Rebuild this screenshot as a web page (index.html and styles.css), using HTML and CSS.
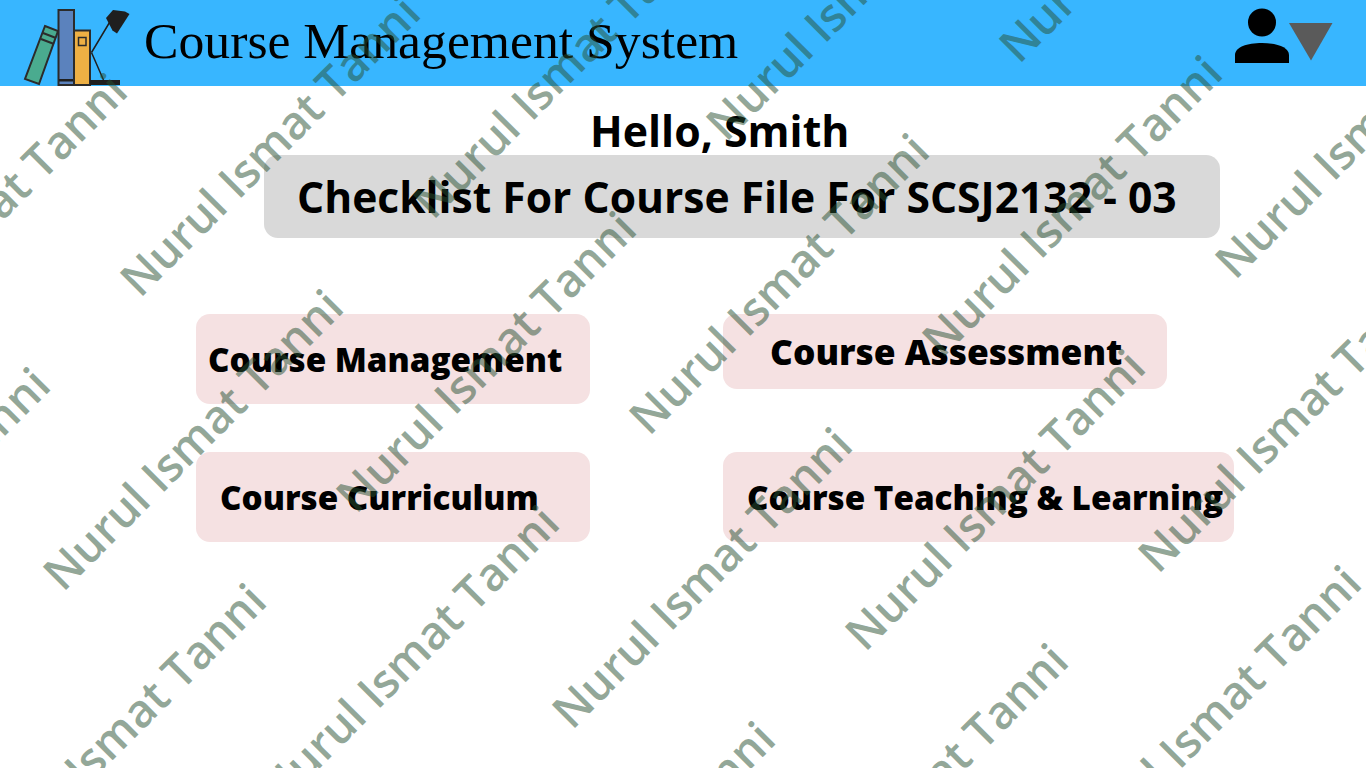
FILE: index.html
```html
<!DOCTYPE html>
<html lang="en">
<head>
<meta charset="utf-8">
<title>Course Management System</title>
<link rel="stylesheet" href="styles.css">
</head>
<body>
<header class="topbar">
  <svg class="logo" width="135" height="86" viewBox="0 0 135 86" aria-hidden="true">
    <polygon class="ink green" points="45,26 58,31 39,84 25,79"/>
    <path class="rule" d="M43,33 L56,38 M41,39 L54,44"/>
    <rect class="ink blue" x="58.5" y="10" width="15.5" height="75"/>
    <rect class="band" x="59" y="79" width="15" height="2.5"/>
    <rect class="ink yellow" x="74" y="30.5" width="16" height="54.5"/>
    <rect class="hollow" x="78.5" y="37.5" width="7.5" height="8"/>
    <rect class="band" x="90" y="80" width="30" height="5"/>
    <path class="arm" d="M91.500,52.500 L111,20 M91.500,52.500 L103.500,80"/>
    <path class="band" d="M106,18 L113,10 L125,11.500 L129.500,14 L117,33.500 L112.500,30.500 Z"/>
  </svg>
  <h1 class="brand">Course Management System</h1>
  <div class="account">
    <svg width="100" height="64" viewBox="0 0 100 64" aria-hidden="true">
      <circle cx="29" cy="22.500" r="14"/>
      <path d="M2,63 V55 C2,47 14,43 29,43 C44,43 56,47 56,55 V63 Z"/>
      <polygon class="caret" points="56,23 99.500,23 78,60.500"/>
    </svg>
  </div>
</header>
<main class="content">
  <p class="greeting">Hello, Smith</p>
  <h2 class="banner">Checklist For Course File For SCSJ2132 - 03</h2>
  <section class="cards">
    <a class="card card-management">Course Management</a>
    <a class="card card-assessment">Course Assessment</a>
    <a class="card card-curriculum">Course Curriculum</a>
    <a class="card card-teaching">Course Teaching &amp; Learning</a>
  </section>
</main>
<svg class="watermark" width="1366" height="768" viewBox="0 0 1366 768" aria-hidden="true">
  <text transform="translate(726 143) rotate(-45)">Nurul Ismat Tanni</text>
  <text transform="translate(1019 65) rotate(-45)">Nurul Ismat Tanni</text>
  <text transform="translate(433 221) rotate(-45)">Nurul Ismat Tanni</text>
  <text transform="translate(140 299) rotate(-45)">Nurul Ismat Tanni</text>
  <text transform="translate(-153 377) rotate(-45)">Nurul Ismat Tanni</text>
  <text transform="translate(649 437) rotate(-45)">Nurul Ismat Tanni</text>
  <text transform="translate(942 359) rotate(-45)">Nurul Ismat Tanni</text>
  <text transform="translate(1235 281) rotate(-45)">Nurul Ismat Tanni</text>
  <text transform="translate(356 515) rotate(-45)">Nurul Ismat Tanni</text>
  <text transform="translate(63 593) rotate(-45)">Nurul Ismat Tanni</text>
  <text transform="translate(-230 671) rotate(-45)">Nurul Ismat Tanni</text>
  <text transform="translate(572 731) rotate(-45)">Nurul Ismat Tanni</text>
  <text transform="translate(865 653) rotate(-45)">Nurul Ismat Tanni</text>
  <text transform="translate(1158 575) rotate(-45)">Nurul Ismat Tanni</text>
  <text transform="translate(279 809) rotate(-45)">Nurul Ismat Tanni</text>
  <text transform="translate(-14 887) rotate(-45)">Nurul Ismat Tanni</text>
  <text transform="translate(495 1025) rotate(-45)">Nurul Ismat Tanni</text>
  <text transform="translate(788 947) rotate(-45)">Nurul Ismat Tanni</text>
  <text transform="translate(1081 869) rotate(-45)">Nurul Ismat Tanni</text>
</svg>
</body>
</html>
```
FILE: styles.css
```css
* { box-sizing: border-box; }
html, body { margin: 0; height: 100%; }
body {
  position: relative;
  width: 1366px;
  height: 768px;
  overflow: hidden;
  background: #fff;
  color: #000;
  font-family: "Open Sans", "Liberation Sans", sans-serif;
}
.topbar {
  height: 86px;
  background: #38b6ff;
  display: flex;
  align-items: flex-start;
}
.logo { flex: none; margin-right: 9px; }
.ink { stroke: #2b2b2b; stroke-width: 2; }
.green { fill: #4aab8f; }
.blue { fill: #5b82bd; }
.yellow { fill: #eeb044; }
.rule { stroke: #2b2b2b; stroke-width: 2; fill: none; }
.band { fill: #1f1f1f; }
.hollow { fill: none; stroke: #2b2b2b; stroke-width: 1.500; }
.arm { stroke: #1f1f1f; stroke-width: 1.500; fill: none; }
.brand {
  margin: 11px 0 0;
  font: 400 51.7px/60px "Liberation Serif", serif;
  white-space: nowrap;
}
.account { margin-left: auto; margin-right: 33px; height: 86px; }
.account svg { display: block; }
.caret { fill: #5a5a5a; }
.content { padding-top: 20px; }
.greeting {
  margin: 0 0 0 590px;
  font-size: 42.8px;
  font-weight: 700;
  line-height: 49px;
  white-space: nowrap;
}
.banner {
  margin: 0 0 0 264px;
  width: 956px;
  height: 83px;
  border-radius: 14px;
  background: #d9d9d9;
  padding-left: 33px;
  font-size: 42.6px;
  font-weight: 700;
  line-height: 83px;
  white-space: nowrap;
}
.cards {
  margin: 76px 0 0 196px;
  display: grid;
  grid-template-columns: 394px auto;
  grid-template-rows: 90px 90px;
  column-gap: 133px;
  row-gap: 48px;
  justify-content: start;
  align-items: start;
}
.card {
  display: flex;
  align-items: center;
  height: 90px;
  border-radius: 14px;
  background: #f5e1e2;
  font-size: 33.2px;
  font-weight: 800;
  white-space: nowrap;
}
.card-management { padding-left: 12px; }
.card-curriculum { padding-left: 24px; }
.card-assessment { width: 444px; height: 75px; padding: 0 0 2px 47px; font-size: 35.300px; }
.card-teaching { width: 511px; padding-left: 24px; }
.watermark {
  position: absolute;
  left: 0;
  top: 0;
  pointer-events: none;
}
.watermark text {
  font-family: "Open Sans", sans-serif;
  font-size: 46px;
  font-weight: 600;
  letter-spacing: 0;
  fill: rgba(40, 80, 50, 0.5);
}
```
